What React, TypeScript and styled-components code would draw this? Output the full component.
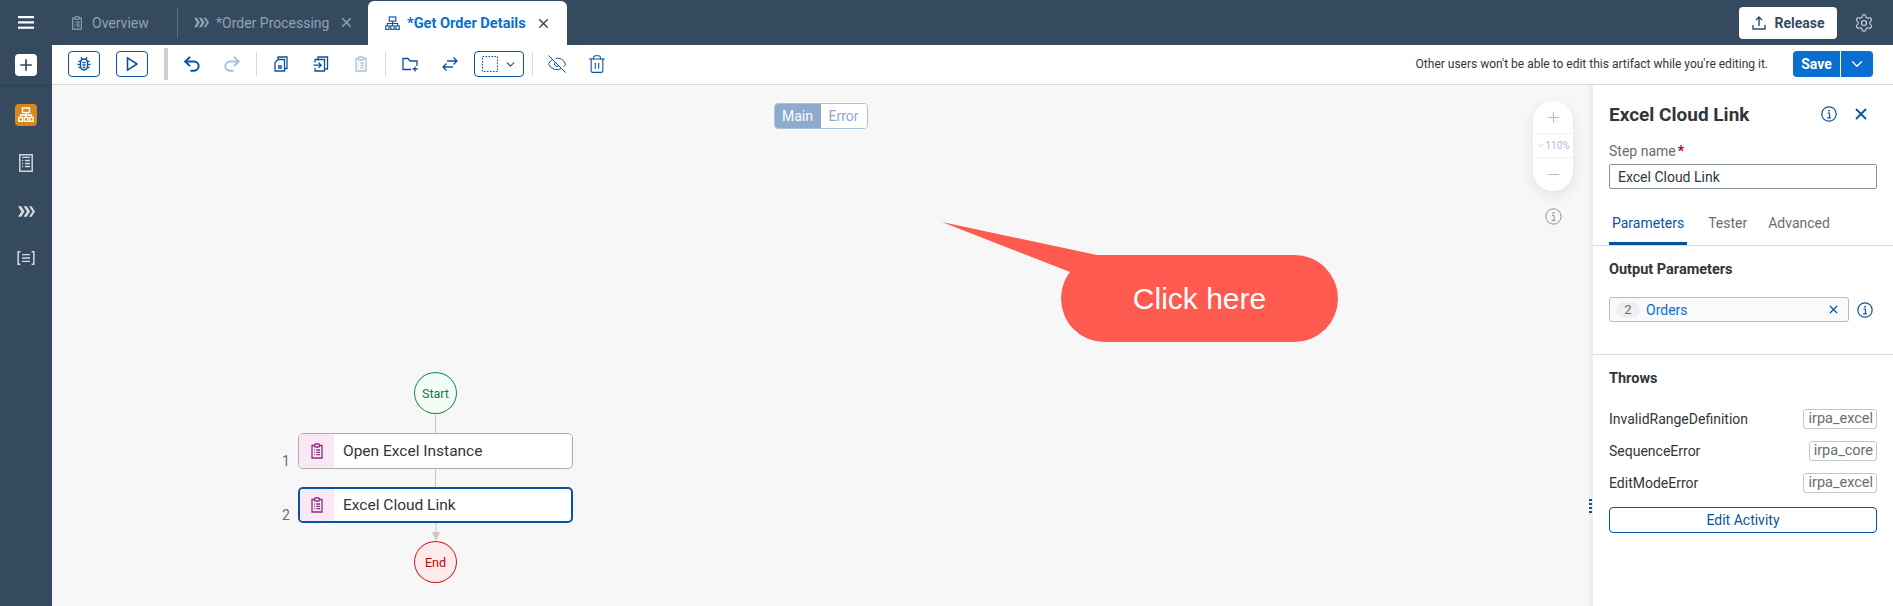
import styled, { createGlobalStyle } from "styled-components";
import { ChevronDown, EyeOff, Minus, Plus, Redo2, Settings, Trash2, Undo2, X } from "lucide-react";

const GlobalStyle = createGlobalStyle`
    html, body {
        margin: 0;
        padding: 0;
        height: 606px;
        overflow: hidden;
        background: #fff;
    }
    * { box-sizing: border-box; }
`;

const shell = "#354a5f";
const blue = "#0854a0";
const FONT = `Roboto, "Noto Sans", sans-serif`;

const Page = styled.div`
    width: 1893px;
    height: 606px;
    display: flex;
    flex-direction: column;
    font-family: ${FONT};
    color: #32363a;
    overflow: hidden;
`;

/* ---------- top bar ---------- */
const TopBar = styled.header`
    height: 45px;
    flex: none;
    background: ${shell};
    display: flex;
    align-items: stretch;
`;

const MenuCell = styled.div`
    width: 52px;
    flex: none;
    display: flex;
    align-items: center;
    justify-content: center;
    color: #fff;
`;

const Tab = styled.div<{ $width: number; $pad: number; $active?: boolean; $sep?: boolean }>`
    width: ${p => p.$width}px;
    padding-left: ${p => p.$pad}px;
    display: flex;
    align-items: center;
    font-size: ${p => (p.$active ? 14.6 : 14)}px;
    position: relative;
    white-space: nowrap;
    color: ${p => (p.$active ? "#0a6ed1" : "#8fa3b8")};
    font-weight: ${p => (p.$active ? 700 : 400)};
    ${p => p.$active && `
        background: #fff;
        margin-top: 1px;
        border-radius: 6px 6px 0 0;
    `}
    ${p => p.$sep && `
        &::after {
            content: "";
            position: absolute;
            right: 0;
            top: 7px;
            height: 31px;
            width: 1px;
            background: #5b6d80;
        }
    `}
`;

const TabIcon = styled.span<{ $color?: string }>`
    display: flex;
    width: 22px;
    flex: none;
    color: ${p => p.$color || "inherit"};
`;

const TabClose = styled.span<{ $color: string }>`
    display: flex;
    margin-left: 10px;
    color: ${p => p.$color};
`;

const TopRight = styled.div`
    margin-left: auto;
    display: flex;
    align-items: center;
    padding-right: 19px;
    gap: 17px;
    color: #d7dee6;
`;

const ReleaseButton = styled.button`
    width: 98px;
    height: 32px;
    border: 0;
    border-radius: 4px;
    background: #fff;
    color: #354a5f;
    font: 700 14px ${FONT};
    display: flex;
    align-items: center;
    justify-content: center;
    gap: 7px;
`;

/* ---------- body ---------- */
const Body = styled.div`
    flex: 1;
    display: flex;
    min-height: 0;
`;

const SideBar = styled.nav`
    width: 52px;
    flex: none;
    background: ${shell};
    display: flex;
    flex-direction: column;
    align-items: center;
    color: #d5dadf;
`;

const AddCell = styled.div`
    height: 40px;
    width: 100%;
    display: flex;
    justify-content: center;
    padding-top: 9px;
    border-bottom: 1px solid #2f4256;
    box-shadow: 0 2px 3px rgba(0, 0, 0, .08);
`;

const AddButton = styled.div`
    width: 22px;
    height: 22px;
    border-radius: 4px;
    background: #fff;
    color: ${shell};
    display: flex;
    align-items: center;
    justify-content: center;
`;

const SideItem = styled.div<{ $active?: boolean; $mt: number }>`
    width: 22px;
    height: 22px;
    margin-top: ${p => p.$mt}px;
    border-radius: 4px;
    background: ${p => (p.$active ? "#d9861c" : "transparent")};
    color: ${p => (p.$active ? "#fff" : "#d5dadf")};
    display: flex;
    align-items: center;
    justify-content: center;
`;

const Main = styled.main`
    flex: 1;
    min-width: 0;
    display: flex;
    flex-direction: column;
`;

/* ---------- toolbar ---------- */
const ToolBar = styled.div`
    height: 40px;
    flex: none;
    border-bottom: 1px solid #d9d9d9;
    background: #fff;
    display: flex;
    align-items: center;
    padding: 0 20px 1px 16px;
`;

const OutlineButton = styled.button<{ $ml?: number; $width?: number }>`
    width: ${p => p.$width || 32}px;
    height: 26px;
    margin-left: ${p => p.$ml || 0}px;
    padding: 0;
    flex: none;
    border: 1px solid ${blue};
    border-radius: 4px;
    background: #fff;
    color: ${blue};
    display: flex;
    align-items: center;
    justify-content: center;
    gap: 6px;
`;

const ThickDivider = styled.span`
    width: 4px;
    height: 32px;
    margin: 0 4px 0 16px;
    background: #cfcfcf;
    flex: none;
`;

const ThinDivider = styled.span<{ $ml?: number }>`
    width: 1px;
    height: 24px;
    margin: 0 4px 0 ${p => p.$ml ?? 4}px;
    background: #d9d9d9;
    flex: none;
`;

const ToolIcon = styled.span<{ $disabled?: boolean }>`
    width: 40px;
    flex: none;
    display: flex;
    justify-content: center;
    color: ${p => (p.$disabled ? "#a9c1da" : blue)};
`;

const LockNote = styled.span`
    margin-left: auto;
    margin-right: 25px;
    font-size: 12px;
    white-space: nowrap;
`;

const SaveGroup = styled.div`
    width: 80px;
    height: 26px;
    flex: none;
    display: flex;
    border-radius: 4px;
    overflow: hidden;
    background: #0a6ed1;
    color: #fff;
    font-size: 14px;
    font-weight: 700;
`;

const SaveLabel = styled.span`
    width: 48px;
    border-right: 1px solid #fff;
    display: flex;
    align-items: center;
    justify-content: center;
`;

const SaveArrow = styled.span`
    flex: 1;
    display: flex;
    align-items: center;
    justify-content: center;
`;

/* ---------- work area ---------- */
const WorkArea = styled.div`
    flex: 1;
    display: flex;
    min-height: 0;
`;

const Canvas = styled.section`
    flex: 1;
    position: relative;
    background: #f7f7f7;
    padding: 287px 0 0 226px;
`;

const Switcher = styled.div`
    position: absolute;
    top: 18px;
    left: 50%;
    transform: translateX(-50%);
    width: 94px;
    height: 26px;
    display: flex;
    border: 1px solid #a9c1da;
    border-radius: 4px;
    overflow: hidden;
    font-size: 14px;
`;

const SwitchItem = styled.span<{ $on?: boolean }>`
    flex: ${p => (p.$on ? "0 0 46px" : 1)};
    background: ${p => (p.$on ? "#8eaacd" : "#fff")};
    color: ${p => (p.$on ? "#fff" : "#8eaacd")};
    display: flex;
    align-items: center;
    justify-content: center;
`;

const ZoomDock = styled.div`
    position: absolute;
    top: 16px;
    right: 16px;
    width: 40px;
    display: flex;
    flex-direction: column;
    align-items: center;
    color: #8a8a8a;
`;

const ZoomPill = styled.div`
    width: 40px;
    height: 90px;
    margin-bottom: 17px;
    border-radius: 20px;
    background: #fff;
    box-shadow: 0 4px 14px rgba(0, 0, 0, .09);
    display: grid;
    grid-template-rows: 32px 25px 33px;
    color: #a9bedb;
`;

const ZoomCell = styled.div<{ $mid?: boolean }>`
    display: flex;
    align-items: center;
    justify-content: center;
    font-size: 10px;
    ${p => p.$mid && `
        border-top: 1px solid #efefef;
        border-bottom: 1px solid #efefef;
    `}
`;

const Flow = styled.div`
    display: grid;
    grid-template-columns: 20px 275px;
    justify-items: center;
`;

const Terminal = styled.div<{ $end?: boolean }>`
    grid-column: 2;
    width: 43px;
    height: 42px;
    border-radius: 50%;
    border: 1px solid ${p => (p.$end ? "#cc1919" : "#188a4b")};
    background: ${p => (p.$end ? "#ffebeb" : "#f1fdf6")};
    color: ${p => (p.$end ? "#bb0000" : "#107e3e")};
    font-size: 12.5px;
    display: flex;
    align-items: center;
    justify-content: center;
`;

const Link = styled.div<{ $height: number }>`
    grid-column: 2;
    width: 1px;
    height: ${p => p.$height}px;
    background: #c8c8c8;
`;

const ArrowLink = styled.div`
    grid-column: 2;
    height: 18px;
    display: flex;
`;

const StepNumber = styled.span`
    grid-column: 1;
    justify-self: start;
    align-self: end;
    padding: 0 0 0 4px;
    font-size: 14px;
    color: #6a6d70;
`;

const Step = styled.div<{ $selected?: boolean }>`
    grid-column: 2;
    width: 275px;
    height: 36px;
    display: flex;
    align-items: stretch;
    border-radius: 5px;
    overflow: hidden;
    background: #fff;
    border: ${p => (p.$selected ? `2px solid ${blue}` : "1px solid #a7adb3")};
    font-size: 15.5px;
`;

const StepIcon = styled.span<{ $selected?: boolean }>`
    width: ${p => (p.$selected ? 34 : 35)}px;
    flex: none;
    background: #f8e9f5;
    color: #8f2c80;
    display: flex;
    align-items: center;
    justify-content: center;
`;

const StepName = styled.span<{ $selected?: boolean }>`
    padding-left: 9px;
    display: flex;
    align-items: center;
`;

const Callout = styled.div`
    position: absolute;
    left: 890px;
    top: 137px;
    width: 396px;
    padding-top: 33px;
    display: flex;
    justify-content: flex-end;
`;

const CalloutTail = styled.svg`
    position: absolute;
    left: 0;
    top: 0;
`;

const CalloutPill = styled.div`
    position: relative;
    width: 277px;
    height: 87px;
    border-radius: 44px;
    background: #ff5a4f;
    color: #fff;
    font: 30px "Liberation Sans", Arial, sans-serif;
    display: flex;
    align-items: center;
    justify-content: center;
`;

/* ---------- right panel ---------- */
const Panel = styled.aside`
    width: 304px;
    flex: none;
    position: relative;
    border-left: 4px solid #efefef;
    background: #fff;
    display: flex;
    flex-direction: column;
`;

const Grip = styled.span`
    position: absolute;
    left: -4px;
    top: 413px;
    width: 3px;
    height: 15px;
    background: radial-gradient(circle, ${blue} 1.2px, transparent 1.4px) 0 0 / 3px 4px repeat-y;
`;

const PanelTitleRow = styled.div`
    height: 58px;
    padding: 0 23px 0 16px;
    display: flex;
    align-items: center;
    color: ${blue};
`;

const PanelTitle = styled.h2`
    margin: 0 auto 0 0;
    font-size: 19px;
    font-weight: 700;
    color: #32363a;
`;

const CloseIcon = styled.span`
    display: flex;
    margin-left: 15px;
`;

const Field = styled.div`
    padding: 0 16px;
`;

const FieldLabel = styled.div`
    height: 21px;
    font-size: 14px;
    line-height: 16px;
    color: #6a6d70;
    b { color: #bb0000; font-weight: 700; margin-left: 2px; }
`;

const TextField = styled.div`
    height: 25px;
    border: 1px solid #89919a;
    border-radius: 2px;
    padding-left: 8px;
    display: flex;
    align-items: center;
    font-size: 14px;
`;

const PanelTabs = styled.div`
    height: 40px;
    margin-top: 17px;
    padding-left: 16px;
    display: flex;
    gap: 21px;
    border-bottom: 1px solid #d9d9d9;
    font-size: 14px;
    color: #6a6d70;
`;

const PanelTab = styled.span<{ $active?: boolean }>`
    height: 39px;
    padding: 9px ${p => (p.$active ? 3 : 0)}px 0;
    ${p => p.$active && `
        color: ${blue};
        border-bottom: 3px solid ${blue};
    `}
`;

const Section = styled.section<{ $height?: number }>`
    padding: 0 16px;
    ${p => p.$height && `
        height: ${p.$height}px;
        border-bottom: 1px solid #d9d9d9;
    `}
`;

const SectionTitle = styled.h3<{ $height: number }>`
    margin: 0;
    height: ${p => p.$height}px;
    padding-top: 14px;
    font-size: 14.5px;
    line-height: 20px;
    font-weight: 700;
`;

const TokenRow = styled.div`
    display: flex;
    align-items: center;
    color: ${blue};
`;

const Token = styled.div`
    width: 240px;
    height: 25px;
    padding: 0 8px 0 6px;
    border: 1px solid #b8bcc0;
    border-radius: 3px;
    background: #fafafa;
    display: flex;
    align-items: center;
    font-size: 14px;
    color: #0a6ed1;
`;

const TokenBadge = styled.span`
    width: 24px;
    height: 16px;
    margin-right: 6px;
    border-radius: 8px;
    background: #eeeff0;
    color: #6a6d70;
    font-size: 13px;
    display: flex;
    align-items: center;
    justify-content: center;
`;

const TokenClear = styled.span`
    margin-left: auto;
    display: flex;
    color: ${blue};
`;

const TokenInfo = styled.span`
    display: flex;
    margin-left: 8px;
`;

const ThrowRow = styled.div`
    height: 32px;
    display: flex;
    align-items: center;
    justify-content: space-between;
    font-size: 14px;
`;

const ModuleTag = styled.span`
    height: 20px;
    padding: 0 3px 0 4px;
    border: 1px solid #c4c6c8;
    border-radius: 3px;
    color: #6a6d70;
    font-size: 14.5px;
    line-height: 18px;
`;

const EditButton = styled.button`
    width: 100%;
    height: 26px;
    margin-top: 8px;
    border: 1px solid ${blue};
    border-radius: 4px;
    background: #fff;
    color: ${blue};
    font: 14px ${FONT};
`;

/* ---------- drawn icons ---------- */
const Glyph = ({ size = 16, sw = 1.3, children }: { size?: number; sw?: number; children: React.ReactNode }) => (
    <svg width={size} height={size} viewBox="0 0 16 16" fill="none" stroke="currentColor" strokeWidth={sw}>
        {children}
    </svg>
);

const MenuIcon = () => (
    <svg width={16} height={13} viewBox="0 0 16 13" fill="currentColor">
        <rect width={16} height={2.2} />
        <rect y={5.3} width={16} height={2.2} />
        <rect y={10.6} width={16} height={2.2} />
    </svg>
);

const ClipboardIcon = ({ size = 16 }: { size?: number }) => (
    <Glyph size={size}>
        <path d="M5.5 2.5H3v12.5h10V2.5h-2.5" />
        <rect x={5.5} y={1} width={5} height={3} rx={1} />
        <path d="M5 7h.8M7.3 7H11M5 9.3h.8M7.3 9.3H11M5 11.6h.8M7.3 11.6H11" />
    </Glyph>
);

const ChevronsIcon = ({ size = 16 }: { size?: number }) => (
    <svg width={size} height={size} viewBox="0 0 16 16" fill="currentColor">
        <path d="M0 3h3l3.2 5L3 13H0l3.2-5zM5.2 3h3l3.2 5-3.2 5h-3l3.2-5zM10.4 3h2.4l3.2 5-3.2 5h-2.4l3.2-5z" />
    </svg>
);

const OrgIcon = ({ size = 16, sw = 1.2 }: { size?: number; sw?: number }) => (
    <Glyph size={size} sw={sw}>
        <rect x={4.5} y={1} width={7} height={4.5} />
        <path d="M8 5.5V8M2.5 10.5V8h11v2.5M8 8v2.5" />
        <rect x={.8} y={10.5} width={3.6} height={3.8} />
        <rect x={6.2} y={10.5} width={3.6} height={3.8} />
        <rect x={11.6} y={10.5} width={3.6} height={3.8} />
    </Glyph>
);

const BugIcon = () => (
    <Glyph>
        <rect x={4.6} y={3} width={6.8} height={11} rx={3.4} />
        <path d="M6 3l-1-2M10 3l1-2M4.6 5.5H2.5M11.4 5.5h2.1M4.6 8.5h-3M11.4 8.5h3M4.6 11.5H2.5M11.4 11.5h2.1M6.5 6.5h3M6.5 9h3M6.5 11.5h3" />
    </Glyph>
);

const PlayIcon = () => (
    <Glyph sw={1.6}>
        <path d="M3.5 1.8v12.4L13 8z" strokeLinejoin="round" />
    </Glyph>
);

const CopyIcon = () => (
    <Glyph>
        <path d="M5 3.5V1h9v11.5h-2.5" />
        <path d="M5 3.5h6.5V15H2V6.5z" />
        <path d="M5 10h4M5 12h4" />
    </Glyph>
);

const MoveIcon = () => (
    <Glyph>
        <path d="M5 4.5V1h9.5v12H12" />
        <path d="M2 6.5V3.5h9.5V15H2v-3" />
        <path d="M.5 9.2h7.5M5.5 6.5l2.7 2.7-2.7 2.7" />
    </Glyph>
);

const FolderPlusIcon = () => (
    <Glyph>
        <path d="M9 13.5H1V2.5h5l2 2.5h7v5" />
        <path d="M13 10.5v5M10.5 13h5" />
    </Glyph>
);

const SwapIcon = () => (
    <Glyph>
        <path d="M15 5H5M11.5 1.5L15 5l-3.5 3.5M1 11h10M4.5 7.5L1 11l3.5 3.5" />
    </Glyph>
);

const DashedSquare = () => (
    <svg width={16} height={16} viewBox="0 0 16 16" fill="none" stroke="currentColor" strokeDasharray="1.6 1.4">
        <rect x={.5} y={.5} width={15} height={15} />
    </svg>
);

const UploadIcon = () => (
    <Glyph sw={1.4}>
        <path d="M8 11V2M5 5l3-3 3 3M2 10v4h12v-4" />
    </Glyph>
);

const InfoIcon = ({ size = 16, sw = 1.2 }: { size?: number; sw?: number }) => (
    <Glyph size={size} sw={sw}>
        <circle cx={8} cy={8} r={7.2} />
        <path d="M6.5 7h2v4.6M6.2 11.8h3.6" />
        <path d="M8 4v1.4" strokeWidth={1.6} />
    </Glyph>
);

const ListDocIcon = () => (
    <Glyph size={18}>
        <rect x={2.5} y={.7} width={11} height={14.6} />
        <path d="M4.5 3h7M4.5 5.8h1M7 5.8h4.5M4.5 8.5h1M7 8.5h4.5M4.5 11.2h1M7 11.2h4.5" />
    </Glyph>
);

const BracketListIcon = () => (
    <Glyph size={18}>
        <path d="M3 2.5H1v11h2M13 2.5h2v11h-2M4.5 5h7M4.5 8h7M4.5 11h7" />
    </Glyph>
);

export default function App() {
    return (
        <Page>
            <GlobalStyle />
            <TopBar>
                <MenuCell><MenuIcon /></MenuCell>
                <Tab $width={126} $pad={18} $sep>
                    <TabIcon><ClipboardIcon size={14} /></TabIcon>
                    Overview
                </Tab>
                <Tab $width={190} $pad={16}>
                    <TabIcon><ChevronsIcon size={15} /></TabIcon>
                    *Order Processing
                    <TabClose $color="#8fa3b8"><X size={15} strokeWidth={2.4} /></TabClose>
                </Tab>
                <Tab $width={199} $pad={17} $active>
                    <TabIcon $color={blue}><OrgIcon size={15} /></TabIcon>
                    *Get Order Details
                    <TabClose $color={shell}><X size={15} strokeWidth={2.4} /></TabClose>
                </Tab>
                <TopRight>
                    <ReleaseButton><UploadIcon />Release</ReleaseButton>
                    <Settings size={20} strokeWidth={1.3} />
                </TopRight>
            </TopBar>
            <Body>
                <SideBar>
                    <AddCell><AddButton><Plus size={18} strokeWidth={2.2} /></AddButton></AddCell>
                    <SideItem $active $mt={19}><OrgIcon size={16} sw={1.4} /></SideItem>
                    <SideItem $mt={26}><ListDocIcon /></SideItem>
                    <SideItem $mt={26}><ChevronsIcon size={17} /></SideItem>
                    <SideItem $mt={25}><BracketListIcon /></SideItem>
                </SideBar>
                <Main>
                    <ToolBar>
                        <OutlineButton><BugIcon /></OutlineButton>
                        <OutlineButton $ml={16}><PlayIcon /></OutlineButton>
                        <ThickDivider />
                        <ToolIcon><Undo2 size={20} strokeWidth={2.4} /></ToolIcon>
                        <ToolIcon $disabled><Redo2 size={20} strokeWidth={2.4} /></ToolIcon>
                        <ThinDivider />
                        <ToolIcon><CopyIcon /></ToolIcon>
                        <ToolIcon><MoveIcon /></ToolIcon>
                        <ToolIcon $disabled><ClipboardIcon /></ToolIcon>
                        <ThinDivider />
                        <ToolIcon><FolderPlusIcon /></ToolIcon>
                        <ToolIcon><SwapIcon /></ToolIcon>
                        <OutlineButton $width={50} $ml={4}><DashedSquare /><ChevronDown size={13} /></OutlineButton>
                        <ThinDivider $ml={8} />
                        <ToolIcon><EyeOff size={20} strokeWidth={1.2} /></ToolIcon>
                        <ToolIcon><Trash2 size={20} strokeWidth={1.3} /></ToolIcon>
                        <LockNote>Other users won't be able to edit this artifact while you're editing it.</LockNote>
                        <SaveGroup>
                            <SaveLabel>Save</SaveLabel>
                            <SaveArrow><ChevronDown size={18} strokeWidth={1.8} /></SaveArrow>
                        </SaveGroup>
                    </ToolBar>
                    <WorkArea>
                        <Canvas>
                            <Switcher>
                                <SwitchItem $on>Main</SwitchItem>
                                <SwitchItem>Error</SwitchItem>
                            </Switcher>
                            <ZoomDock>
                                <ZoomPill>
                                    <ZoomCell><Plus size={17} strokeWidth={1.6} /></ZoomCell>
                                    <ZoomCell $mid><ChevronDown size={9} />110%</ZoomCell>
                                    <ZoomCell><Minus size={17} strokeWidth={1.6} /></ZoomCell>
                                </ZoomPill>
                                <InfoIcon size={17} sw={.9} />
                            </ZoomDock>
                            <Flow>
                                <Terminal>Start</Terminal>
                                <Link $height={19} />
                                <StepNumber>1</StepNumber>
                                <Step>
                                    <StepIcon><ClipboardIcon /></StepIcon>
                                    <StepName>Open Excel Instance</StepName>
                                </Step>
                                <Link $height={18} />
                                <StepNumber>2</StepNumber>
                                <Step $selected>
                                    <StepIcon $selected><ClipboardIcon /></StepIcon>
                                    <StepName $selected>Excel Cloud Link</StepName>
                                </Step>
                                <ArrowLink>
                                    <svg width={10} height={18} viewBox="0 0 10 18">
                                        <path d="M5 0v10" stroke="#c8c8c8" />
                                        <path d="M1 9h8l-4 9z" fill="#c8c8c8" />
                                    </svg>
                                </ArrowLink>
                                <Terminal $end>End</Terminal>
                            </Flow>
                            <Callout>
                                <CalloutTail width={170} height={60} viewBox="0 0 170 60">
                                    <path d="M0 0L155 33H170V50H128z" fill="#ff5a4f" />
                                </CalloutTail>
                                <CalloutPill>Click here</CalloutPill>
                            </Callout>
                        </Canvas>
                        <Panel>
                            <Grip />
                            <PanelTitleRow>
                                <PanelTitle>Excel Cloud Link</PanelTitle>
                                <InfoIcon size={16} />
                                <CloseIcon><X size={18} strokeWidth={2.4} /></CloseIcon>
                            </PanelTitleRow>
                            <Field>
                                <FieldLabel>Step name<b>*</b></FieldLabel>
                                <TextField>Excel Cloud Link</TextField>
                            </Field>
                            <PanelTabs>
                                <PanelTab $active>Parameters</PanelTab>
                                <PanelTab>Tester</PanelTab>
                                <PanelTab>Advanced</PanelTab>
                            </PanelTabs>
                            <Section $height={109}>
                                <SectionTitle $height={51}>Output Parameters</SectionTitle>
                                <TokenRow>
                                    <Token>
                                        <TokenBadge>2</TokenBadge>
                                        Orders
                                        <TokenClear><X size={13} strokeWidth={2.4} /></TokenClear>
                                    </Token>
                                    <TokenInfo><InfoIcon size={16} /></TokenInfo>
                                </TokenRow>
                            </Section>
                            <Section>
                                <SectionTitle $height={48}>Throws</SectionTitle>
                                <ThrowRow>InvalidRangeDefinition<ModuleTag>irpa_excel</ModuleTag></ThrowRow>
                                <ThrowRow>SequenceError<ModuleTag>irpa_core</ModuleTag></ThrowRow>
                                <ThrowRow>EditModeError<ModuleTag>irpa_excel</ModuleTag></ThrowRow>
                                <EditButton>Edit Activity</EditButton>
                            </Section>
                        </Panel>
                    </WorkArea>
                </Main>
            </Body>
        </Page>
    );
}
